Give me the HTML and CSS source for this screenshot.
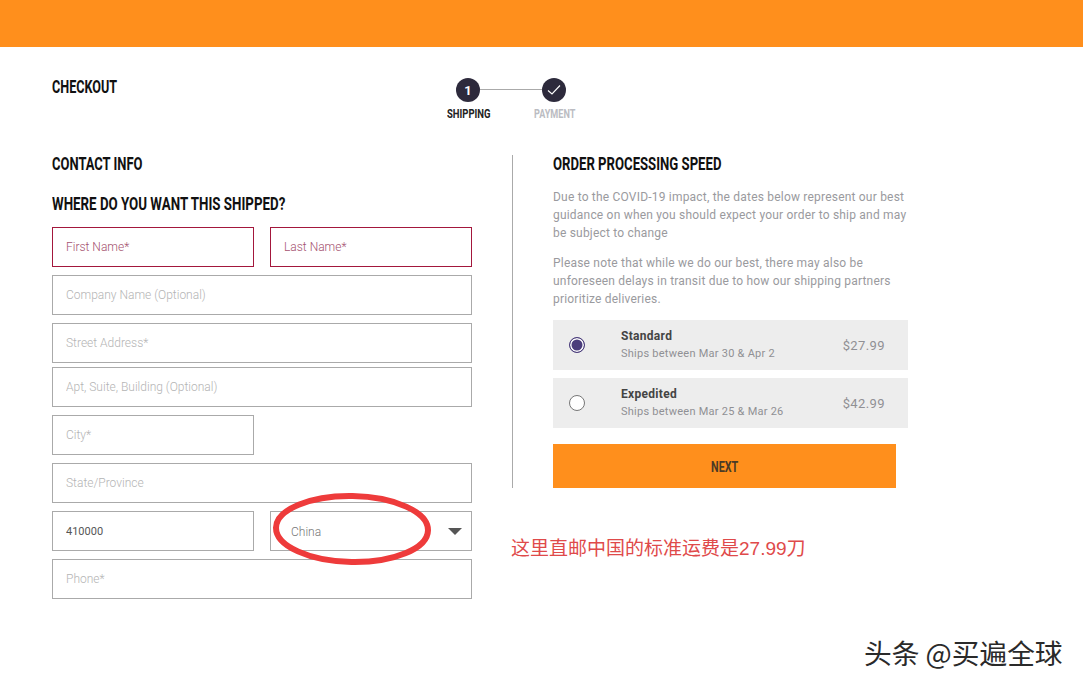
FILE: index.html

```html
<!DOCTYPE html>
<html lang="zh-CN">
<head>
    <meta charset="UTF-8">
    <meta name="viewport" content="width=device-width, initial-scale=1.0">
    <title>Checkout</title>
    <link rel="stylesheet" href="styles.css">
</head>
<body>
    <div class="topbar"></div>
    <div class="page">
        <div class="checkout-head">
            <h1>CHECKOUT</h1>
            <div class="stepper">
                <div class="track">
                    <span class="dot">1</span>
                    <span class="line"></span>
                    <span class="dot">
                        <svg width="14" height="12" viewBox="0 0 14 12"><path d="M1 6.5 L5 10 L13 1.5" fill="none" stroke="#fff" stroke-width="1.1"/></svg>
                    </span>
                </div>
                <div class="step-labels">
                    <span class="step-on">SHIPPING</span>
                    <span class="step-off">PAYMENT</span>
                </div>
            </div>
        </div>

        <div class="columns">
            <form class="contact">
                <h2>CONTACT INFO</h2>
                <h2 class="where">WHERE DO YOU WANT THIS SHIPPED?</h2>
                <div class="form-grid">
                    <input class="half error" placeholder="First Name*">
                    <input class="half error" placeholder="Last Name*">
                    <input class="full" placeholder="Company Name (Optional)">
                    <input class="full" placeholder="Street Address*">
                    <input class="full tight" placeholder="Apt, Suite, Building (Optional)">
                    <input class="half" placeholder="City*">
                    <input class="full" placeholder="State/Province">
                    <input class="half filled" value="410000">
                    <div class="half select">
                        <span>China</span>
                        <i class="arrow"></i>
                    </div>
                    <input class="full" placeholder="Phone*">
                </div>
            </form>

            <div class="speed">
                <h2>ORDER PROCESSING SPEED</h2>
                <p class="note">Due to the COVID-19 impact, the dates below represent our best guidance on when you should expect your order to ship and may be subject to change</p>
                <p class="note">Please note that while we do our best, there may also be unforeseen delays in transit due to how our shipping partners prioritize deliveries.</p>
                <label class="option">
                    <input type="radio" name="speed" checked>
                    <span class="option-text">
                        <b>Standard</b>
                        <small>Ships between Mar 30 &amp; Apr 2</small>
                    </span>
                    <span class="price">$27.99</span>
                </label>
                <label class="option">
                    <input type="radio" name="speed">
                    <span class="option-text">
                        <b>Expedited</b>
                        <small>Ships between Mar 25 &amp; Mar 26</small>
                    </span>
                    <span class="price">$42.99</span>
                </label>
                <button class="next" type="button"><span>NEXT</span></button>
            </div>
        </div>

        <!-- annotations on top of the screenshot -->
        <svg class="circle-mark" width="170" height="84" viewBox="0 0 170 84">
            <ellipse cx="85" cy="42" rx="76" ry="33" fill="none" stroke="#ee3b3b" stroke-width="6"/>
        </svg>
        <div class="red-note">这里直邮中国的标准运费是27.99刀</div>
        <div class="watermark">头条 @买遍全球</div>
    </div>
</body>
</html>
```

FILE: styles.css

```css
body {
    margin: 0;
    background-color: #fff;
    font-family: "Roboto", "Noto Sans CJK SC", sans-serif;
    color: #111;
}
.topbar {
    height: 47px;
    background-color: #ff8f1c;
}
.page {
    position: relative;
    height: 641px;
    padding: 0 52px;
    box-sizing: border-box;
    overflow: hidden;
}
/* no condensed font here, so the headings get squeezed */
h1, h2 {
    margin: 0;
    font-family: "Roboto", sans-serif;
    font-weight: 700;
    color: #111;
    font-size: 18px;
    line-height: 20px;
    white-space: nowrap;
    transform: scaleX(0.72);
    transform-origin: left center;
}
.checkout-head {
    display: flex;
    box-sizing: border-box;
    padding-top: 30px;
    height: 78px;
}
.checkout-head h1 {
    width: 395px;
    flex: none;
    transform: scaleX(0.7);
}
.stepper {
    display: flex;
    flex-direction: column;
    margin-top: 1px;
}
.track {
    display: flex;
    align-items: center;
    margin-left: 9px;
}
.dot {
    width: 24px;
    height: 24px;
    border-radius: 50%;
    background-color: #2d2a3c;
    color: #fff;
    font-size: 13px;
    font-weight: 700;
    display: flex;
    align-items: center;
    justify-content: center;
}
.line {
    width: 62px;
    height: 1px;
    margin-top: -1px;
    background-color: #aaa;
}
.step-labels {
    display: flex;
    gap: 43px;
    margin-top: 5px;
    font-weight: 700;
    font-size: 13px;
    line-height: 14px;
}
.step-labels span {
    width: 44px;
    white-space: nowrap;
    transform: scaleX(0.73);
    transform-origin: left center;
}
.step-on {
    color: #222;
}
.step-labels .step-off {
    color: #bbbcc2;
    transform: scaleX(0.7);
}
.columns {
    display: flex;
}
.contact {
    width: 420px;
    padding-top: 29px;
}
.where {
    margin-top: 20px;
    transform: scaleX(0.74);
}
.form-grid {
    display: grid;
    grid-template-columns: 202px 202px;
    column-gap: 16px;
    row-gap: 8px;
    margin-top: 13px;
}
.form-grid input, .select {
    height: 40px;
    box-sizing: border-box;
    border: 1px solid #aaa;
    padding: 0 13px;
    font-family: "Roboto", sans-serif;
    font-size: 12px;
    font-weight: 300;
    color: #555;
    background-color: #fff;
    border-radius: 0;
    outline: none;
    width: 100%;
}
.form-grid input::placeholder {
    color: #b4b4b4;
}
.form-grid .filled {
    font-size: 11px;
    font-weight: 400;
}
.form-grid .full {
    grid-column: 1 / 3;
}
.form-grid .tight {
    margin-top: -4px;
}
.form-grid .error {
    border-color: #a3173c;
}
.form-grid .error::placeholder {
    color: #a5526f;
}
.select {
    display: flex;
    align-items: center;
    justify-content: space-between;
    padding: 1px 9px 0 20px;
    color: #777;
}
.arrow {
    width: 0;
    height: 0;
    border-left: 7px solid transparent;
    border-right: 7px solid transparent;
    border-top: 7px solid #555;
}
.speed {
    width: 355px;
    margin-left: 40px;
    margin-top: 30px;
    padding-left: 40px;
    border-left: 1px solid #aaa;
    height: 333px;
}
.speed h2 {
    margin-bottom: 14px;
    margin-top: -1px;
    transform: scaleX(0.73);
}
.note {
    margin: 0 0 12px;
    font-size: 12px;
    line-height: 18px;
    letter-spacing: 0.2px;
    color: #9a9a9e;
}
.option {
    display: flex;
    align-items: center;
    width: 355px;
    height: 50px;
    margin-bottom: 8px;
    background-color: #ededed;
}
.option input {
    appearance: none;
    box-sizing: border-box;
    width: 16px;
    height: 16px;
    margin: 0 0 0 16px;
    border: 1px solid #777;
    border-radius: 50%;
    background-color: #fff;
}
.option input:checked {
    background-color: #4b3d7c;
    box-shadow: inset 0 0 0 1.5px #fff;
    border-color: #4b3d7c;
}
.option-text {
    display: flex;
    flex-direction: column;
    margin-left: 36px;
    flex: 1;
}
.option-text b {
    font-size: 12px;
    line-height: 17px;
    letter-spacing: 0.3px;
    color: #444;
}
.option-text small {
    font-size: 11px;
    line-height: 17px;
    letter-spacing: 0.25px;
    color: #909094;
}
.price {
    margin-right: 23px;
    font-size: 13px;
    letter-spacing: 0.4px;
    color: #909094;
}
.next {
    display: block;
    width: 343px;
    height: 44px;
    margin-top: 16px;
    padding-top: 3px;
    border: none;
    background-color: #ff8f1c;
    color: #4a3a26;
    font-family: "Roboto", sans-serif;
    font-weight: 700;
    font-size: 14px;
}
.next span {
    display: inline-block;
    transform: scaleX(0.77);
}
.circle-mark {
    position: absolute;
    left: 267px;
    top: 440px;
    transform: rotate(1deg);
}
.red-note {
    position: absolute;
    left: 511px;
    top: 490px;
    font-family: "Liberation Sans", "Noto Sans CJK SC", sans-serif;
    font-size: 19px;
    line-height: 24px;
    color: #df4a4a;
}
.watermark {
    position: absolute;
    left: 864px;
    top: 588px;
    font-family: "Noto Sans CJK SC", sans-serif;
    font-size: 27.7px;
    line-height: 34px;
    color: #2a2a2a;
}
```
